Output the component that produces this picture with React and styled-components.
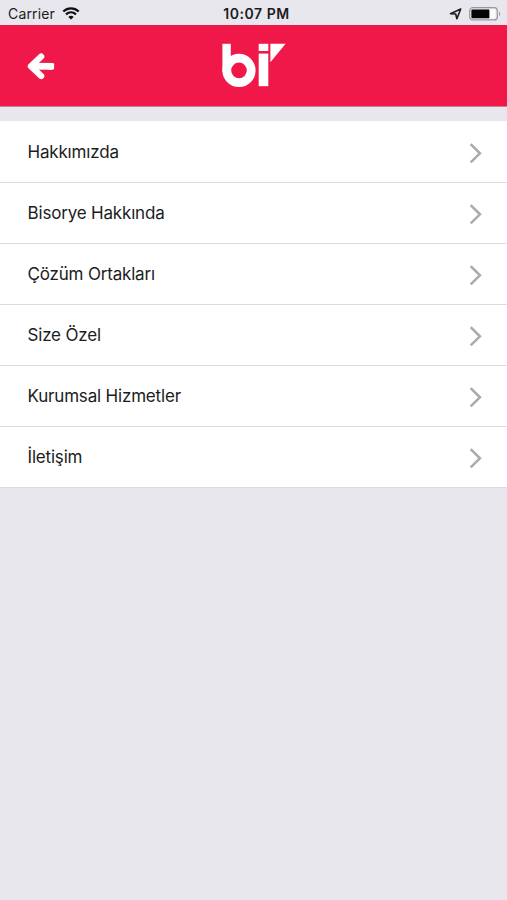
import React from 'react';
import styled, { createGlobalStyle } from 'styled-components';

const GlobalStyle = createGlobalStyle`
  * {
    margin: 0;
    padding: 0;
    box-sizing: border-box;
  }
  body {
    background-color: #e7e7ed;
    color: #1c1c1d;
    font-family: 'Inter', 'Liberation Sans', sans-serif;
  }
  svg {
    display: block;
  }
`;

const PageStyle = styled.div`
  min-height: 900px;
  background-color: #e7e7ed;
`;

const StatusBarStyle = styled.div`
  height: 25px;
  padding: 2px 6px 0 8px;
  display: grid;
  grid-template-columns: 1fr auto 1fr;
  align-items: center;
  font-size: 14px;
  line-height: 22px;

  .status__left,
  .status__right {
    display: flex;
    align-items: center;
  }
  .status__left {
    gap: 7px;
    letter-spacing: 0.15px;
  }
  .status__right {
    justify-content: flex-end;
    gap: 7px;
  }
  .status__time {
    margin-left: 4px;
    font-weight: 600;
    font-size: 14px;
    letter-spacing: 0.55px;
  }
`;

const HeaderStyle = styled.header`
  height: 82px;
  padding: 18px 27px 0;
  display: grid;
  grid-template-columns: 1fr auto 1fr;
  align-items: start;
  background-color: #f01848;
  border-bottom: 1px solid #c18497;
`;

const BackButton = styled.button`
  width: 28px;
  margin-top: 10px;
  border: none;
  background: none;
  cursor: pointer;
`;

const MenuStyle = styled.ul`
  margin-top: 14.45px;
  list-style: none;
`;

const MenuItem = styled.li`
  height: 61.1px;
  padding: 0.2px 25px 0 27.5px;
  display: flex;
  align-items: center;
  justify-content: space-between;
  background-color: #fff;
  border-bottom: 1px solid #dcdcde;
  font-size: 17px;
  line-height: 24px;
  letter-spacing: -0.18px;

  svg {
    margin-top: 3px;
  }
`;

const menuItems = [
  'Hakkımızda',
  'Bisorye Hakkında',
  'Çözüm Ortakları',
  'Size Özel',
  'Kurumsal Hizmetler',
  'İletişim',
];

const WifiIcon = () => (
  <svg width="18" height="13" viewBox="0 0 18 13" fill="none">
    <path d="M1.3 4.5C5.7.4 12.3.4 16.7 4.5" stroke="#111" strokeWidth="2.3" />
    <path d="M4 7.4c2.9-2.6 7.1-2.6 10 0" stroke="#111" strokeWidth="2.2" />
    <path d="M9 12.6 6.3 9.9c1.5-1.4 3.9-1.4 5.4 0z" fill="#111" />
  </svg>
);

const LocationIcon = () => (
  <svg width="13" height="12" viewBox="0 0 13 12" fill="none">
    <path
      d="M11.7 1 1.5 5.7l5.2.3 1.2 4.7z"
      stroke="#1c1c1d"
      strokeWidth="1.6"
      strokeLinejoin="round"
    />
  </svg>
);

const BatteryIcon = () => (
  <svg width="32" height="14" viewBox="0 0 32 14" fill="none">
    <rect x=".7" y=".7" width="27.6" height="12.2" rx="3" stroke="#99999d" strokeWidth="1.2" />
    <rect x="2.4" y="2.4" width="18.2" height="8.8" rx="1" fill="#050505" />
    <rect x="20.6" y="2.2" width="6" height="9.2" rx="1" fill="#fafafa" />
    <path d="M30 4.5c1.6.8 1.6 3.8 0 4.6z" fill="#99999d" />
  </svg>
);

const BackIcon = () => (
  <svg width="28" height="27" viewBox="0 0 28 27" fill="none">
    <path
      d="M14.2 3.6 3.9 13.3l10.3 9.7"
      stroke="#fff"
      strokeWidth="6.2"
      strokeLinecap="round"
      strokeLinejoin="round"
    />
    <path d="M5 13.3h19" stroke="#fff" strokeWidth="6.8" />
    <rect x="20" y="9.9" width="7.1" height="6.8" rx="1.4" fill="#fff" />
  </svg>
);

const Logo = () => (
  <svg width="64" height="46" viewBox="0 0 64 46" fill="none">
    <rect x=".4" y=".8" width="8.4" height="28" fill="#fff" />
    <circle cx="17" cy="27.4" r="12.2" stroke="#fff" strokeWidth="8.8" />
    <rect x="36.7" y=".8" width="9.6" height="7.2" fill="#fff" />
    <rect x="36.7" y="10.6" width="9.6" height="32.6" fill="#fff" />
    <path d="M48.4.8h15.2L48.4 19.3z" fill="#fff" />
  </svg>
);

const ChevronIcon = () => (
  <svg width="13" height="21" viewBox="0 0 13 21" fill="none">
    <path d="m1.7 1.2 9.2 9.1-9.2 9.1" stroke="#ababab" strokeWidth="2.6" />
  </svg>
);

const App = () => {
  return (
    <>
      <GlobalStyle />
      <PageStyle>
        <StatusBarStyle>
          <div className="status__left">
            <span>Carrier</span>
            <WifiIcon />
          </div>
          <div className="status__time">10:07 PM</div>
          <div className="status__right">
            <LocationIcon />
            <BatteryIcon />
          </div>
        </StatusBarStyle>

        <HeaderStyle>
          <BackButton aria-label="Geri">
            <BackIcon />
          </BackButton>
          <Logo />
        </HeaderStyle>

        <MenuStyle>
          {menuItems.map((title) => (
            <MenuItem key={title}>
              <span>{title}</span>
              <ChevronIcon />
            </MenuItem>
          ))}
        </MenuStyle>
      </PageStyle>
    </>
  );
};

export default App;
